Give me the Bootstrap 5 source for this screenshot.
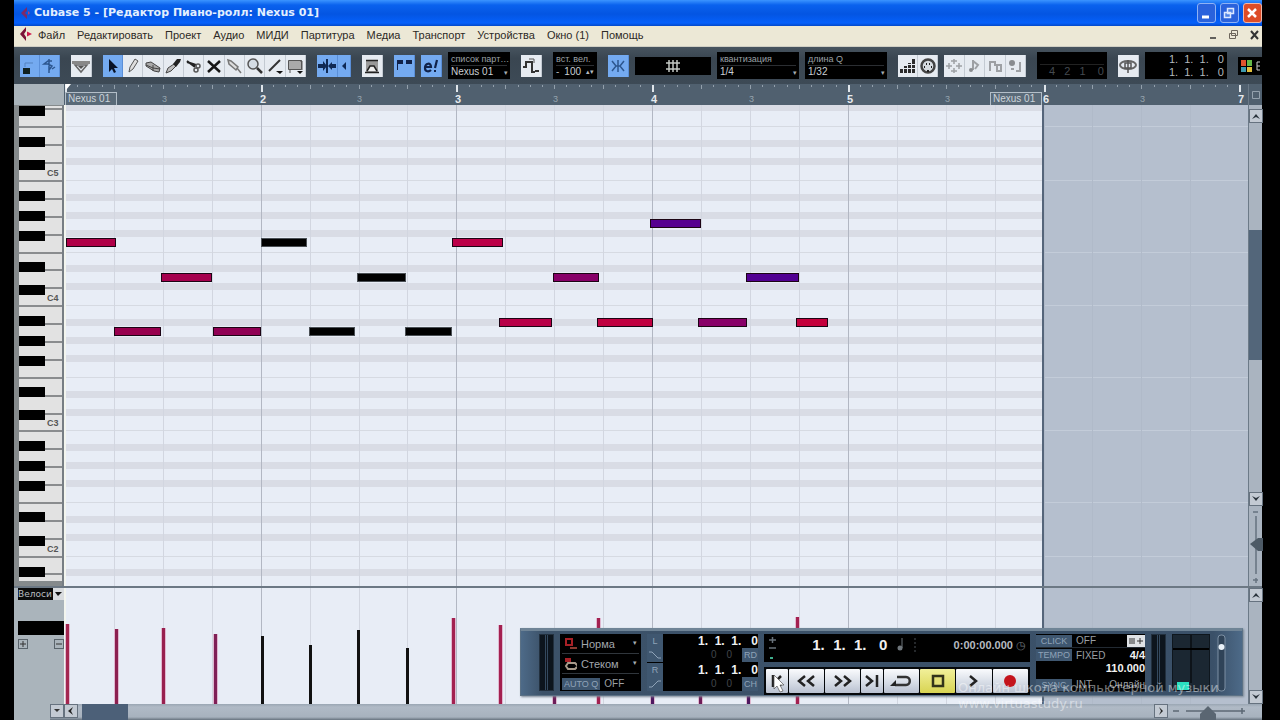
<!DOCTYPE html>
<html lang="ru">
<head>
<meta charset="utf-8">
<meta name="viewport" content="width=device-width, initial-scale=1">
<title>Cubase 5 - Редактор Пиано-ролл</title>
<link href="https://cdn.jsdelivr.net/npm/bootstrap@5.3.0/dist/css/bootstrap.min.css" rel="stylesheet">
<style>
  body { background: #000; font-family: "DejaVu Sans", "Liberation Sans", sans-serif; font-size: 10px; line-height: 12px; color: #222; }
  .daw { margin: 0 18px 0 14px; background: #aab4bb; }
  button, input, select { font: inherit; border: 0; padding: 0; border-radius: 0; }
  svg { display: block; }
  /* title bar */
  .titlebar { height: 26px; background: linear-gradient(#3b94ff 0, #0a62ee 5px, #0455e2 14px, #0560fb 23px, #0348c8); color: #e3f0ff; }
  .titlebar h1 { font-family: "DejaVu Sans", sans-serif; font-size: 11px; line-height: 24px; font-weight: 700; }
  .wbtn { width: 19px; height: 20px; border: 1px solid #8fb2f5; border-radius: 3px; background: #2a62dc; }
  .wbtn.shut { background: #dd4c28; border-color: #f0b8a8; }
  /* menu */
  .menubar { height: 21px; background: #ece8d6; border-bottom: 1px solid #d0cfc4; }
  .menubar a { color: #2d2a26; text-decoration: none; font-family: "Liberation Sans", sans-serif; font-size: 11px; line-height: 18px; }
  .menubar ul { gap: 12px; }
  .menubar button { background: none; width: 18px; height: 18px; }
  /* toolbar */
  .tools { height: 37px; background: linear-gradient(#47545f, #3a4651 30%, #3d4a56); gap: 11px; padding: 0 0 0 6px; overflow: hidden; }
  .tools .near { gap: 6px; }
  .tb { width: 21px; height: 22px; background: #e6ebf1; display: flex; align-items: center; justify-content: center; border-right: 1px solid #c3cad2; flex: none; }
  .tb.on { background: #74aaf0; border-color: #5a8fd8; }
  .tb.thin { width: 13px; }
  .strip .tb { width: auto; flex: 1 1 0; }
  .dim svg { opacity: .4; }
  .lcd { background: #000; color: #b4b9be; height: 27px; padding: 1px 3px; font-family: "Liberation Sans", sans-serif; flex: none; }
  .lcd label { display: block; font-size: 9px; line-height: 12px; color: #9aa0a6; white-space: nowrap; border-bottom: 1px solid #2b2e32; }
  .lcd select, .lcd input { display: block; width: 100%; background: transparent; color: #c9ced3; font-size: 10px; line-height: 12px; height: 12px; appearance: none; }
  .drop { position: relative; }
  .drop::after { content: "▾"; position: absolute; right: 2px; bottom: 0; font-size: 7px; line-height: 12px; color: #a5abb0; pointer-events: none; }
  .digits { font-size: 11px; line-height: 13px; text-align: right; white-space: pre; }
  .w40 { width: 40px; } .w44 { width: 44px; } .w62 { width: 62px; } .w70 { width: 70px; } .w76 { width: 76px; } .w82 { width: 82px; }
  /* editor */
  .gutter { width: 50px; flex: none; }
  .ruler { height: 21px; background: #50606f; }
  .roll, .lane { background: #b5bfce; overflow: hidden; }
  .keys { background: #858a8c; border-right: 2px solid #777e84; overflow: hidden; }
  .side { width: 14px; flex: none; background: #aab4c0; border-left: 1px solid #6c7a88; }
  .arrow { background: #c3cad3; border: 1px solid #66727f; width: 14px; height: 14px; flex: none; display: flex; align-items: center; justify-content: center; }
  .thumb { background: #53667a; }
  .seam { height: 2px; background: #6c7884; }
  .lane, .lanehead { height: 116px; }
  .lanehead .blk { background: #000; height: 14px; }
  .lanehead select { background: #0b0b0b; color: #b9bdc0; width: 35px; height: 12px; appearance: none; font-size: 9px; line-height: 12px; }
  .lanehead .dn { width: 11px; height: 12px; background: #d9dcdf; display: flex; align-items: center; justify-content: center; }
  .sq { width: 10px; height: 10px; border: 1px solid #59636b; background: #aab4bb; display: flex; align-items: center; justify-content: center; }
  .hbar { height: 16px; background: linear-gradient(#9aa6b3 0, #b0bac6 3px, #a7b2be 13px, #66727e); }
  .hthumb { width: 46px; background: #4c6078; }
  /* transport window, floats over the editor */
  .transport { position: absolute; right: 19px; bottom: 24px; height: 68px; background: linear-gradient(90deg, #4d6a88, #3c5269 3%, #3a5068 96%, #4d6a88); border: 1px solid #5b7185; border-top: 3px solid #6f8496; padding: 3px 14px 4px 18px; gap: 6px; box-shadow: 1px 1px 2px #7b8794; }
  .transport .lcdbox { background: #000; font-family: "Liberation Sans", sans-serif; color: #9a9fa4; font-size: 10px; }
  .transport select { background: transparent; color: #a2a7ac; appearance: none; font-size: 11px; line-height: 14px; height: 14px; width: 60px; }
  .modes { width: 81px; padding: 0 2px; }
  .modes .drop { height: 20px; padding: 0 2px; border-bottom: 1px solid #30363c; gap: 4px; }
  .modes .drop::after { line-height: 20px; }
  .chip { background: #3f5770; color: #8fa3b8; font-size: 9px; line-height: 12px; padding: 0 2px; border: 0; }
  .vu { width: 15px; background: #0d151d; border: 1px solid #22303e; padding: 0 5px; }
  .vu::before { content: ""; display: block; height: 100%; border-left: 1px solid #34495e; border-right: 1px solid #34495e; }
  .loc { width: 111px; }
  .loc .chip { width: 16px; height: 14px; }
  .loc .val { color: #eef0f2; font-weight: 700; font-size: 12px; line-height: 14px; white-space: pre; text-align: right; }
  .loc .sub { color: #41464b; font-size: 10px; line-height: 14px; gap: 10px; }
  .mainpos { width: 266px; }
  .mainpos .face { height: 28px; }
  .bigpos { font-size: 15px; line-height: 22px; font-weight: 700; color: #f0f0f0; white-space: pre; }
  .clock { font-size: 11px; line-height: 22px; font-weight: 700; color: #b6bbc0; font-family: "Liberation Sans", sans-serif; }
  .keysrow { background: #05080b; padding: 2px; height: 28px; gap: 1px; margin-top: 5px; }
  .keysrow button { background: linear-gradient(#fafbfd, #d4dae4 60%, #b9c1d0); display: flex; align-items: center; justify-content: center; flex: 36 1 0; border-radius: 1px; }
  .keysrow button.short { flex-grow: 22; }
  .keysrow button.lit { background: linear-gradient(#f2f09a, #d8d452); }
  .tempo { width: 109px; }
  .tempo .chip { width: 36px; padding: 0; }
  .tempo .line { height: 14px; gap: 4px; line-height: 13px; border-bottom: 1px solid #222a32; }
  .tempo .bright { color: #f2f2f2; font-weight: 700; font-size: 11px; }
  .cpu { width: 38px; background: #1b2732; border: 1px solid #0e161d; }
  .stamp { position: absolute; left: 944px; bottom: 8px; color: #fff; font-size: 13px; line-height: 16px; opacity: .45; white-space: nowrap; pointer-events: none; }
  .cursor { position: absolute; left: 758px; bottom: 26px; pointer-events: none; }
</style>
</head>
<body>
<main class="daw position-relative d-flex flex-column min-vh-100">
  <header class="titlebar d-flex align-items-center pe-0 ps-1">
    <svg width="16" height="16" viewBox="0 0 16 16"><path d="M9 2 3 8l6 6V10L7 8l2-2z" fill="#7c2a6a"/><path d="M10 6v4l2-2z" fill="#b83c70"/></svg>
    <h1 class="m-0 flex-fill">Cubase 5 - [Редактор Пиано-ролл: Nexus 01]</h1>
    <div class="d-flex gap-1">
      <button class="wbtn" aria-label="Свернуть"><svg width="17" height="18"><path d="M4 13h7" stroke="#fff" stroke-width="3"/></svg></button>
      <button class="wbtn" aria-label="Восстановить"><svg width="17" height="18"><path d="M6.500 4.500h6v5h-6zM3.500 8.500h6v5h-6z" fill="#4e82e6" stroke="#dce8ff" stroke-width="1.500"/></svg></button>
      <button class="wbtn shut" aria-label="Закрыть"><svg width="17" height="18"><path d="m4 5 8 8m0-8-8 8" stroke="#fff" stroke-width="2.500"/></svg></button>
    </div>
  </header>

  <nav class="menubar d-flex align-items-start ps-1">
    <svg class="me-1" width="16" height="16" viewBox="0 0 16 16"><path d="M8 1 2 8l6 7v-4L6 8l2-3z" fill="#7a1238"/><path d="M9 5.500v5L14 8z" fill="#d0184c"/></svg>
    <ul class="list-unstyled d-flex m-0 flex-fill">
      <li><a href="#">Файл</a></li><li><a href="#">Редактировать</a></li><li><a href="#">Проект</a></li><li><a href="#">Аудио</a></li><li><a href="#">МИДИ</a></li><li><a href="#">Партитура</a></li><li><a href="#">Медиа</a></li><li><a href="#">Транспорт</a></li><li><a href="#">Устройства</a></li><li><a href="#">Окно (1)</a></li><li><a href="#">Помощь</a></li>
    </ul>
    <button aria-label="Свернуть документ"><svg width="18" height="18"><path d="M2 12h6" stroke="#333" stroke-width="1.500"/></svg></button>
    <button aria-label="Восстановить документ"><svg width="18" height="18"><path d="M5.500 4.500h6v5h-6zM3.500 7.500h6v5h-6z" fill="#eee9d8" stroke="#6d665c"/></svg></button>
    <button aria-label="Закрыть документ"><svg width="18" height="18"><path d="m7 5 7 8m0-8-7 8" stroke="#333" stroke-width="2"/></svg></button>
  </nav>

  <section class="tools d-flex align-items-center" aria-label="Инструменты">
    <div class="strip d-flex w40">
      <button class="tb on" aria-label="Соло"><svg width="18" height="18"><path d="M3 11h7v6H3z" fill="#122"/><path d="M5 10V6h8" stroke="#5583bf" fill="none"/></svg></button>
      <button class="tb on" aria-label="Отклик"><svg width="18" height="18"><path d="M12 4H8L4 7h4l4 2-3 4M9 2v14M12 12l3-2" stroke="#2d578f" stroke-width="1.500" fill="none"/></svg></button>
    </div>
    <button class="tb" aria-label="Инфо"><svg width="20" height="18"><path d="M1 4h18v3H1z" fill="#888"/><path d="m4 8 6 7 6-7z" fill="none" stroke="#666" stroke-width="1.500"/><path d="m7 9 3 3 3-3z" fill="#555"/></svg></button>
    <div class="strip d-flex" style="width:205px">
      <button class="tb on" aria-label="Выбор"><svg width="14" height="18"><path d="M4 2v13l3-3 2 4 2-1-2-4h4z" fill="#081226"/></svg></button>
      <button class="tb" aria-label="Карандаш"><svg width="16" height="18"><path d="m4 15 1-5 5-8 3 2-5 8z" fill="#ddd" stroke="#555"/></svg></button>
      <button class="tb" aria-label="Ластик"><svg width="18" height="18"><path d="m2 6 5-1 9 6-1 4-5-1-8-5z" fill="#aaa" stroke="#444"/><path d="m2 8 7 3 7 1M9 8v6" stroke="#444" fill="none"/></svg></button>
      <button class="tb" aria-label="Трим"><svg width="18" height="18"><path d="m2 16 2-5 6-4 2 2-5 5z" fill="#bbb" stroke="#444"/><path d="m9 7 4-5 4 0-1 3-4 5z" fill="#222"/></svg></button>
      <button class="tb" aria-label="Ножницы"><svg width="18" height="18"><path d="m2 4 8 6M2 5l9 3" stroke="#222" stroke-width="2"/><circle cx="13" cy="9" r="2" fill="none" stroke="#555" stroke-width="1.500"/><circle cx="11" cy="13" r="2" fill="none" stroke="#555" stroke-width="1.500"/></svg></button>
      <button class="tb" aria-label="Заглушить"><svg width="18" height="18"><path d="m3 4 12 11M15 4 3 15" stroke="#161616" stroke-width="2.500"/></svg></button>
      <button class="tb" aria-label="Клей"><svg width="18" height="18"><path d="m3 3 3 1 7 6-2 3-7-6zM12 11l4 5" fill="#ddd" stroke="#777" stroke-width="1.500"/></svg></button>
      <button class="tb" aria-label="Лупа"><svg width="18" height="18"><circle cx="7" cy="7" r="5" fill="#d5dce4" stroke="#555" stroke-width="1.500"/><path d="m11 11 5 5" stroke="#333" stroke-width="2.500"/></svg></button>
      <button class="tb" aria-label="Линия"><svg width="18" height="18"><path d="M3 14 14 3" stroke="#333" stroke-width="2"/><path d="M10 14h7l-3 3z" fill="#111"/></svg></button>
      <button class="tb" aria-label="Деформация"><svg width="18" height="18"><path d="M2.500 3.500h13v9h-13z" fill="#aaa" stroke="#555"/><path d="M4 13v3M14 4h2v9" stroke="#555" fill="none"/><path d="M11 14h6l-3 3z" fill="#111"/></svg></button>
    </div>
    <div class="d-flex">
      <button class="tb on" aria-label="Автопрокрутка"><svg width="20" height="18"><path d="M10 2v14" stroke="#102a55" stroke-width="2"/><path d="M1 7h5V4l4 5-4 5v-3H1zM19 7h-4V5l-4 4 4 4v-2h4z" fill="#102a55"/></svg></button>
      <button class="tb on thin" aria-label="Следовать"><svg width="8" height="14"><path d="M6 3v8L2 7z" fill="#102a55"/></svg></button>
    </div>
    <button class="tb" aria-label="Границы"><svg width="18" height="18"><path d="M3 3h12v12H3z" fill="#999"/><path d="M3 3.500h12M2 15.500h14M4 14l3-5h4l3 5" stroke="#222" stroke-width="1.500" fill="#eee"/></svg></button>
    <div class="d-flex near align-items-center">
      <button class="tb on" aria-label="Контроллеры"><svg width="18" height="18"><path d="M2 5h6M11 5h6" stroke="#10224a" stroke-width="4"/><path d="M2.500 5v8" stroke="#10224a"/></svg></button>
      <button class="tb on" aria-label="Редактировать только активную"><svg width="18" height="18"><path d="M3 10h6c0-5-6-4-6 1 0 4 4 4 6 2M15 3l-2 8M12 14h2" stroke="#10224a" stroke-width="2.200" fill="none"/></svg></button>
      <div class="lcd w62 drop"><label for="part">список парт…</label><select id="part"><option>Nexus 01</option></select></div>
    </div>
    <button class="tb" aria-label="Прослушивание"><svg width="20" height="18"><path d="M2 10h3V5h6v10h3M14 14h4" stroke="#333" stroke-width="2" fill="none"/><path d="M8 2h5v4" stroke="#555" fill="none"/></svg></button>
    <div class="lcd w44"><label for="vel">вст. вел.</label><div class="d-flex align-items-center"><span>-</span><input id="vel" class="text-center" value="100"><span style="font-size:7px">▴▾</span></div></div>
    <div class="d-flex near align-items-center">
      <button class="tb on" aria-label="Привязка"><svg width="18" height="18"><path d="M9 3v12M3 4l4 5-4 5M15 4l-4 5 4 5M6 9h6" stroke="#2d578f" stroke-width="1.500" fill="none"/></svg></button>
      <div class="w76 d-flex justify-content-center align-items-center" style="background:#000;height:18px"><svg width="16" height="14"><path d="M4 1v12M8 1v12M12 1v12M1 4h14M1 10h14" stroke="#c4c8c4" stroke-width="1.500"/></svg></div>
      <div class="lcd drop w82"><label for="q">квантизация</label><select id="q"><option>1/4</option></select></div>
      <div class="lcd drop w82"><label for="lq">длина Q</label><select id="lq"><option>1/32</option></select></div>
    </div>
    <div class="d-flex near align-items-center">
      <div class="strip d-flex w40">
        <button class="tb" aria-label="Ступенчатый ввод"><svg width="18" height="18"><path d="M1 12h3v4H1zM5 9h3v7H5zM9 6h3v10H9zM13 2h3v14h-3z" fill="#2b2b2b"/><path d="M0 11.500h17M0 7.500h17" stroke="#e6ebf1"/></svg></button>
        <button class="tb" aria-label="MIDI ввод"><svg width="18" height="18"><circle cx="9" cy="9" r="6.500" fill="#d6dbe0" stroke="#444" stroke-width="2.500"/><path d="M5 10h1M7 7h1M10 7h1M12 10h1M8 14h2" stroke="#222" stroke-width="2"/></svg></button>
      </div>
      <div class="strip dim d-flex w82">
        <button class="tb" aria-label="Переместить"><svg width="18" height="18"><path d="M9 2v5M9 11v5M1 9h6M11 9h6M4 6v6M14 6v6M6 4h6M6 14h6" stroke="#333" stroke-width="1.500"/></svg></button>
        <button class="tb" aria-label="Нота"><svg width="18" height="18"><path d="M8 3v10M8 4l5 4-3 4" stroke="#333" stroke-width="2" fill="none"/><circle cx="6" cy="13" r="2"/></svg></button>
        <button class="tb" aria-label="Громкость ноты"><svg width="18" height="18"><path d="M4 14V5h5v4M11 8h4v6h-4z" stroke="#333" stroke-width="2" fill="none"/></svg></button>
        <button class="tb" aria-label="Высота ноты"><svg width="18" height="18"><circle cx="6" cy="6" r="3"/><path d="M14 5v9h-4M5 12h3" stroke="#333" stroke-width="2" fill="none"/></svg></button>
      </div>
    </div>
    <div class="lcd w70 digits"><div style="height:12px;border-bottom:1px solid #222"></div><span style="color:#444a50">4   2   1    0</span></div>
    <div class="d-flex near align-items-center">
      <button class="tb" aria-label="Цикл"><svg width="20" height="18"><ellipse cx="10" cy="8" rx="8" ry="4" fill="none" stroke="#666" stroke-width="2"/><path d="M10 3v13M7 6h6v5H7z" stroke="#555" fill="none" stroke-width="1.500"/></svg></button>
      <div class="lcd w82 digits">1.  1.  1.   0<br>1.  1.  1.   0</div>
    </div>
    <div class="d-flex align-items-center flex-fill" style="background:#000;height:18px"><svg width="24" height="18"><path d="M3 3h5v6H3z" fill="#e0532e"/><path d="M9 3h5v6H9z" fill="#64b848"/><path d="M3 10h5v5H3z" fill="#3f9bb0"/><path d="M9 10h5v5H9z" fill="#e2c13e"/><path d="M22 5h-3v8h3M19 9h3" stroke="#ccc" fill="none"/></svg></div>
  </section>

  <div class="d-flex">
    <div class="gutter"></div>
    <svg class="ruler flex-fill" id="ruler" style="width:0"></svg>
    <div class="side d-flex align-items-center justify-content-center" style="background:#50606f"><svg width="12" height="12"><path d="M2.500 2.500h7v7h-7z" fill="none" stroke="#94a1ad"/></svg></div>
  </div>

  <div class="d-flex flex-fill">
    <svg class="gutter keys" id="keys" style="height:auto"></svg>
    <svg class="roll flex-fill" id="roll" style="width:0;height:auto"></svg>
    <div class="side d-flex flex-column pt-1">
      <button class="arrow" aria-label="Вверх"><svg width="8" height="6"><path d="M0 6 4 1l4 5-4-2z" fill="#2a333c"/></svg></button>
      <div style="flex:107"></div><div class="thumb" style="flex:131"></div><div style="flex:132"></div>
      <button class="arrow" aria-label="Вниз"><svg width="8" height="6"><path d="M0 0 4 5l4-5-4 2z" fill="#2a333c"/></svg></button>
      <svg width="14" height="80"><path d="M7 10v58M4 6h5M4 74h5M7 72v5" stroke="#66727f" stroke-width="1.500"/><path d="m1 38 8-6h5v13H9z" fill="#4d5a66"/></svg>
    </div>
  </div>
  <div class="seam"></div>

  <div class="d-flex">
    <div class="gutter lanehead">
      <div class="d-flex ps-1">
        <select class="flex-fill" aria-label="Контроллер"><option>Велоси</option></select>
        <span class="dn"><svg width="7" height="5"><path d="M0 0h7L3 4z" fill="#111"/></svg></span>
      </div>
      <div class="blk ms-1" style="margin-top:21px"></div>
      <div class="d-flex justify-content-between mt-1 ms-1">
        <button class="sq" aria-label="Добавить"><svg width="8" height="8"><path d="M4 1v6M1 4h6" stroke="#333"/></svg></button>
        <button class="sq" aria-label="Убрать"><svg width="8" height="8"><path d="M1 4h6" stroke="#333"/></svg></button>
      </div>
    </div>
    <svg class="lane flex-fill" id="lane" style="width:0"></svg>
    <div class="side d-flex flex-column justify-content-between">
      <button class="arrow" aria-label="Вверх"><svg width="8" height="6"><path d="M0 6 4 1l4 5-4-2z" fill="#2a333c"/></svg></button>
      <button class="arrow" aria-label="Вниз"><svg width="8" height="6"><path d="M0 0 4 5l4-5-4 2z" fill="#2a333c"/></svg></button>
    </div>
  </div>

  <div class="d-flex">
    <div style="width:36px"></div>
    <div class="hbar d-flex flex-fill">
      <button class="arrow" aria-label="Пресеты"><svg width="6" height="4"><path d="M0 0h6L3 3z" fill="#333"/></svg></button>
      <button class="arrow" aria-label="Влево"><svg width="6" height="8"><path d="M5 0 0 4l5 4-2-4z" fill="#222"/></svg></button>
      <div class="hthumb ms-1"></div>
      <div class="flex-fill"></div>
      <button class="arrow" aria-label="Вправо"><svg width="6" height="8"><path d="m1 0 4 4-4 4 2-4z" fill="#222"/></svg></button>
      <svg width="94" height="16"><path d="M5 7h6M18 7h54M71 7h6M74 4v6" stroke="#5c6874" stroke-width="1.500"/><path d="m40 2 8 8v6H32v-6z" fill="#5a6672"/></svg>
    </div>
  </div>

  <section class="transport d-flex" aria-label="Транспорт">
    <div class="vu"></div>
    <div class="modes lcdbox">
      <div class="drop d-flex align-items-center"><svg width="14" height="14"><path d="M2 2h6v6H2z" fill="none" stroke="#a82026" stroke-width="2"/><path d="M6 11h8" stroke="#8a3a30" stroke-width="2"/></svg><select aria-label="Режим записи"><option>Норма</option></select></div>
      <div class="drop d-flex align-items-center"><svg width="14" height="14"><path d="M1 1h6v4H1z" fill="#a82026"/><path d="M4 6h7l3 3-3 3H4L2 9z" fill="none" stroke="#a89a8a" stroke-width="2"/></svg><select aria-label="Режим цикла"><option>Стеком</option></select></div>
      <div class="d-flex mt-1"><button class="chip">AUTO Q</button><span class="ps-1">OFF</span></div>
    </div>
    <div class="loc d-flex lcdbox">
      <div class="d-flex flex-column justify-content-between">
        <button class="chip">L</button>
        <button class="chip" aria-label="Панч-ин"><svg width="12" height="12"><path d="M0 3h3l6 6h3" fill="none" stroke="#8fa3b8"/></svg></button>
        <button class="chip">R</button>
        <button class="chip" aria-label="Панч-аут"><svg width="12" height="12"><path d="M0 9h3l6-6h3" fill="none" stroke="#8fa3b8"/></svg></button>
      </div>
      <div class="flex-fill d-flex flex-column justify-content-between">
        <div class="val">1.  1.  1.   0</div>
        <div class="sub d-flex justify-content-end"><span>0</span><span>0</span><button class="chip">RD</button></div>
        <div class="val">1.  1.  1.   0</div>
        <div class="sub d-flex justify-content-end"><span>0</span><span>0</span><button class="chip">CH</button></div>
      </div>
    </div>
    <div class="mainpos">
      <div class="lcdbox face d-flex justify-content-between px-1">
        <svg width="10" height="26"><path d="M1 6h7M4.500 3v6M1 14h7" stroke="#68717a" stroke-width="1.500"/><path d="M2 24h3" stroke="#3fae8d" stroke-width="2"/></svg>
        <div class="d-flex"><span class="bigpos">1.  1.  1.   0</span>
        <svg class="ms-2" width="24" height="24"><path d="M7 4v10" stroke="#6f767c"/><circle cx="5" cy="14" r="2.500" fill="#6f767c"/><path d="M20 4v16" stroke="#4b5156" stroke-dasharray="2 2"/></svg></div>
        <span class="clock">0:00:00.000 <span class="fw-normal" style="color:#6b7278">◷</span></span>
      </div>
      <div class="keysrow d-flex">
        <button class="short" aria-label="В начало"><svg width="14" height="16"><path d="M3 2v12M11 3 6 8l5 5" stroke="#222" stroke-width="2.500" fill="none"/></svg></button>
        <button aria-label="Назад"><svg width="20" height="16"><path d="M9 3 3 8l6 5M18 3l-6 5 6 5" stroke="#222" stroke-width="2.500" fill="none"/></svg></button>
        <button aria-label="Вперёд"><svg width="20" height="16"><path d="m2 3 6 5-6 5M11 3l6 5-6 5" stroke="#222" stroke-width="2.500" fill="none"/></svg></button>
        <button class="short" aria-label="В конец"><svg width="16" height="16"><path d="m2 3 6 5-6 5M13 2v12" stroke="#222" stroke-width="2.500" fill="none"/></svg></button>
        <button aria-label="Цикл"><svg width="24" height="16"><path d="M8 4h9c5 0 5 8 0 8H6" stroke="#333" stroke-width="2.500" fill="none"/><path d="m1 13 6-6v6z" fill="#222"/></svg></button>
        <button class="lit" aria-label="Стоп"><svg width="16" height="16"><path d="M3 3h10v10H3z" stroke="#33331a" stroke-width="2.500" fill="#e4e078"/></svg></button>
        <button aria-label="Старт"><svg width="16" height="16"><path d="m4 3 6 5-6 5" stroke="#222" stroke-width="2.500" fill="none"/></svg></button>
        <button aria-label="Запись"><svg width="16" height="16"><circle cx="8" cy="8" r="6" fill="#c4141c"/></svg></button>
      </div>
    </div>
    <div class="tempo lcdbox">
      <div class="line d-flex align-items-center"><button class="chip">CLICK</button><span class="flex-fill">OFF</span><svg width="18" height="12"><path d="M0 0h18v12H0z" fill="#dfe2e5"/><path d="M3 3v6M5 3v6M7 3v6M10 6h6M13 3v6" stroke="#333"/></svg></div>
      <div class="line d-flex align-items-center border-0"><button class="chip">TEMPO</button><span class="flex-fill">FIXED</span><span class="bright">4/4</span></div>
      <div class="bright text-end">110.000</div>
      <div class="line d-flex align-items-center mt-1"><button class="chip">SYNC</button><span class="flex-fill">INT.</span><span>Онлайн</span></div>
    </div>
    <div class="vu"></div>
    <div class="cpu"><svg width="36" height="58"><path d="M0 14h36" stroke="#000" stroke-width="2"/><path d="M18 0v48" stroke="#000"/><path d="M4 47h12v8H4z" fill="#2be0c0"/></svg></div>
    <svg width="12" height="58"><rect x="2" y="1" width="7" height="56" rx="3" fill="#2f4358" stroke="#7c8fa3"/><circle cx="5.500" cy="13" r="3" fill="#e9f1f8"/></svg>
  </section>
  <svg class="cursor" width="14" height="20"><path d="M2 1v14l3-3 3 6 3-1-3-6h4z" fill="#fff" stroke="#555" stroke-width=".7"/></svg>
  <div class="stamp">Онлайн школа компьютерной музыки<br>www.virtuastudy.ru</div>
</main>

<script src="https://cdn.jsdelivr.net/npm/bootstrap@5.3.0/dist/js/bootstrap.bundle.min.js"></script>
<script>
  const NS = 'http://www.w3.org/2000/svg';
  function put(host, tag, attrs, text) {
    const el = document.createElementNS(NS, tag);
    for (const k in attrs) el.setAttribute(k, attrs[k]);
    if (text) el.textContent = text;
    host.appendChild(el);
    return el;
  }
  const BAR = 195.7, PART_END = 978, FIRST_C = 76, OCT = 125.2;

  // time ruler
  const ruler = document.getElementById('ruler');
  for (let i = 0; i <= 96; i++) {
    const x = Math.round(1 + i * BAR / 16);
    put(ruler, 'rect', { x, y: 1, width: i % 16 ? 1 : 2, height: i % 16 ? (i % 4 ? 2 : 4) : 7, fill: i % 16 ? '#93a0ac' : '#dfe5ea' });
  }
  put(ruler, 'path', { d: 'M1 0h6l-5 6z', fill: '#fff' });
  for (let b = 1; b <= 6; b++) {
    const x = Math.round(b * BAR);
    put(ruler, 'text', { x, y: 19, fill: '#e6eaee', 'font-size': 11, 'font-weight': 700, 'font-family': 'Liberation Sans' }, String(b + 1));
    put(ruler, 'text', { x: x - 98, y: 18, fill: '#96a3ae', 'font-size': 9, 'font-family': 'Liberation Sans' }, '3');
  }
  for (const x of [1, 926]) {
    put(ruler, 'rect', { x: x + .5, y: 8.5, width: 51, height: 14, fill: '#5a6a78', stroke: '#b3bec8' });
    put(ruler, 'text', { x: x + 3, y: 18, fill: '#ccd4da', 'font-size': 10, 'font-family': 'Liberation Sans' }, 'Nexus 01');
  }

  // keyboard
  const keys = document.getElementById('keys');
  put(keys, 'rect', { x: 5, y: 1, width: 43, height: 475, fill: '#e2e2e2' });
  for (let i = -4; i < 24; i++) put(keys, 'rect', { x: 5, y: Math.round(FIRST_C + i * OCT / 7) - 1, width: 43, height: 2, fill: '#8a8c8e' });
  for (let o = -1; o < 4; o++) {
    for (const d of [0, 31, 51, 71, 102]) {
      const y = Math.round(55 + o * OCT + d);
      if (y < 470) put(keys, 'rect', { x: 5, y: Math.max(y, 1), width: 26, height: 10, fill: '#000' });
    }
    if (o >= 0) put(keys, 'text', { x: 33, y: Math.round(71 + o * OCT), 'font-size': 9, 'font-weight': 700, 'font-family': 'Liberation Sans', fill: '#555' }, 'C' + (5 - o));
  }

  // note grid; inside the part the colours are lighter than outside it
  const roll = document.getElementById('roll'), lane = document.getElementById('lane');
  for (const host of [roll, lane]) put(host, 'rect', { x: 0, y: 0, width: PART_END, height: '100%', fill: '#e8edf6' });
  for (let i = -4; i < 24; i++) {
    const y = Math.round(FIRST_C + i * OCT / 7), step = (i + 14) % 7;
    if (step === 0 || step === 4) {
      put(roll, 'rect', { x: 0, y: y - 1, width: PART_END, height: 1, fill: '#d6dae2' });
      put(roll, 'rect', { x: PART_END, y: y - 1, width: '100%', height: 1, fill: '#c3ccd9' });
    } else put(roll, 'rect', { x: 0, y: y - 5, width: PART_END, height: 7, fill: '#d9dce5' });
  }
  for (let i = 1; i < 24; i++) {
    const x = Math.round(1 + i * BAR / 4), out = x > PART_END;
    for (const host of [roll, lane])
      put(host, 'rect', { x, y: 0, width: 1, height: '100%', fill: out ? '#b0bac9' : i % 4 ? '#d2d6e0' : '#b2b7c3' });
  }
  for (const host of [roll, lane]) {
    put(host, 'rect', { x: PART_END, y: 0, width: 2, height: '100%', fill: '#55657a' });
    put(host, 'rect', { x: 0, y: 0, width: 2, height: '100%', fill: '#f3f5ee' });
  }
  // [start, length, row centre, colour]
  const notes = [
    [2, 50, 137, '#b00048'], [50, 47, 226, '#98004e'], [97, 51, 172, '#a6004e'], [149, 48, 226, '#900054'],
    [197, 46, 137, '#000'], [245, 46, 226, '#000'], [293, 49, 172, '#000'], [341, 47, 226, '#000'],
    [388, 51, 137, '#bc0048'], [435, 53, 217, '#b80048'], [489, 46, 172, '#880068'], [533, 56, 217, '#c00040'],
    [586, 51, 118, '#560090'], [634, 49, 217, '#880068'], [682, 53, 172, '#520092'], [732, 32, 217, '#c4003c']
  ];
  for (const [x, w, y, fill] of notes)
    put(roll, 'rect', { x: x + .5, y: y - 3.5, width: w - 1, height: 8, fill, stroke: fill === '#000' ? '#4a4f54' : '#1c0414' });
  // [x, top, colour]
  const vel = [[2, 36, '#a3264f'], [51, 41, '#8c2050'], [98, 40, '#98204f'], [150, 46, '#802056'], [197, 48, '#111'], [245, 57, '#111'],
    [293, 42, '#111'], [342, 60, '#111'], [388, 30, '#a32050'], [435, 37, '#a32050'], [489, 50, '#6d1c58'], [533, 30, '#a32050'],
    [587, 60, '#4e1860'], [635, 50, '#6d1c58'], [683, 60, '#4e1860'], [732, 29, '#a32050']];
  for (const [x, y, fill] of vel) {
    if (fill !== '#111') put(lane, 'rect', { x: x - 1, y, width: 5, height: 116, fill: '#e0b8d0' });
    put(lane, 'rect', { x, y, width: 3, height: 116, fill });
  }
</script>
</body>
</html>
